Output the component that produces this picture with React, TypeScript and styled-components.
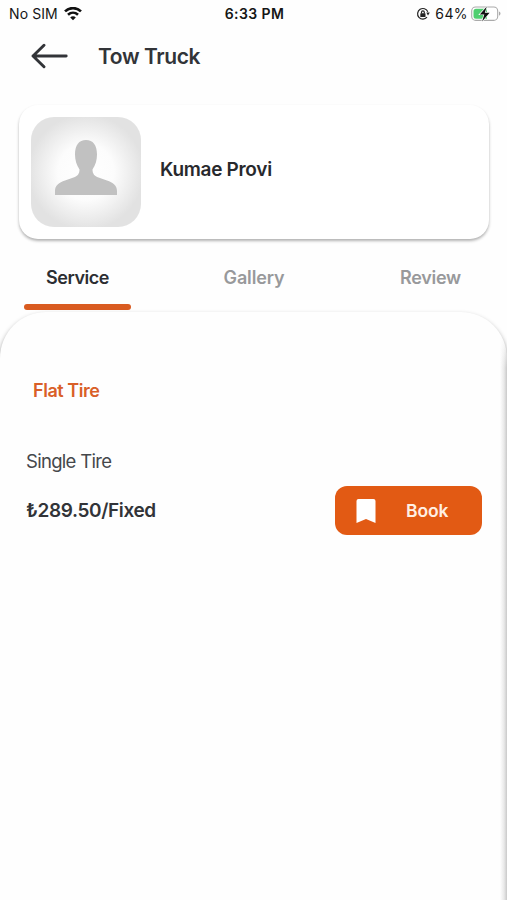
import React from "react";
import styled, { createGlobalStyle } from "styled-components";

const GlobalStyle = createGlobalStyle`
  * { box-sizing: border-box; }
  body { margin: 0; background: #fefefe; }
`;

const Screen = styled.main`
  display: flex;
  flex-direction: column;
  width: 507px;
  height: 900px;
  overflow: hidden;
  background: #fefefe;
  color: #323438;
  font-family: Inter, "Liberation Sans", sans-serif;
`;

const StatusBar = styled.div`
  display: grid;
  grid-template-columns: 1fr auto 1fr;
  align-items: center;
  height: 28px;
  padding: 0 7px 0 9px;
  color: #161616;
  font-size: 14px;
  line-height: 28px;
`;

const StatusGroup = styled.div<{ $end?: boolean }>`
  display: flex;
  align-items: center;
  justify-content: ${(p) => (p.$end ? "flex-end" : "flex-start")};
  gap: ${(p) => (p.$end ? 3 : 6)}px;
  margin-right: ${(p) => (p.$end ? -1 : 0)}px;
  white-space: nowrap;
  & > span + svg { flex: none; }
  & > svg + span { margin-left: ${(p) => (p.$end ? 2 : 0)}px; }
`;

const Label = styled.span<{ $size: number; $weight?: number; $spacing?: number }>`
  font-size: ${(p) => p.$size}px;
  font-weight: ${(p) => p.$weight ?? 600};
  letter-spacing: ${(p) => p.$spacing ?? 0}px;
  white-space: nowrap;
`;

const Header = styled.header`
  display: flex;
  align-items: center;
  height: 56px;
  padding-left: 31px;
  gap: 30px;
`;

const BackButton = styled.button`
  display: flex;
  padding: 0;
  border: 0;
  background: none;
  color: inherit;
`;

const ProfileCard = styled.section`
  display: flex;
  align-items: center;
  gap: 19px;
  height: 134px;
  margin: 21px 18px 0 19px;
  padding-left: 12px;
  padding-bottom: 1px;
  border-radius: 19px;
  background: #fff;
  box-shadow: 0 2px 3px rgba(0, 0, 0, 0.3);
  color: #28292d;
`;

const ProfileName = styled.div`
  padding-bottom: 4px;
`;

const Avatar = styled.div`
  width: 110px;
  height: 110px;
  border-radius: 23px;
  overflow: hidden;
  background: radial-gradient(circle at 50% 50%, #fff 0%, #fcfcfc 36%, #e2e2e2 74%);
`;

const Tabs = styled.nav`
  display: grid;
  grid-template-columns: repeat(3, 107px);
  justify-content: space-between;
  height: 72px;
  padding: 22px 23px 1px 24px;
`;

const Tab = styled.div<{ $active?: boolean }>`
  display: flex;
  flex-direction: column;
  align-items: center;
  justify-content: space-between;
  line-height: 34px;
  color: ${(p) => (p.$active ? "#2c2e32" : "#98999b")};
  &::after {
    content: "";
    width: 107px;
    height: 6px;
    border-radius: 3px;
    background: ${(p) => (p.$active ? "#d95b20" : "transparent")};
  }
`;

const Panel = styled.section`
  flex: 1;
  margin-top: 1px;
  padding: 65px 25px 0 26px;
  border-radius: 46px 46px 0 0;
  background:
    linear-gradient(to bottom, #fefefe, rgba(254, 254, 254, 0) 34px) 100% 22px / 7px 34px no-repeat,
    linear-gradient(to left, #c9c9c9, #e9e9e9 3px, #fefefe 7px) 100% 22px / 7px 100% no-repeat,
    #fefefe;
  box-shadow: 0 3px 5px rgba(0, 0, 0, 0.45);
`;

const Category = styled.h2`
  margin: 0 0 0 7px;
  color: #d95f28;
  font-size: 18px;
  line-height: 28px;
`;

const ServiceName = styled.div`
  margin-top: 41px;
  line-height: 30px;
  color: #45474b;
`;

const ServiceRow = styled.div`
  display: flex;
  align-items: center;
  justify-content: space-between;
  margin-top: 9px;
`;

const BookButton = styled.button`
  display: flex;
  align-items: center;
  gap: 30px;
  width: 147px;
  height: 49px;
  padding: 0 0 0 21px;
  border: 0;
  border-radius: 12px;
  background: #e25a14;
  color: #fff0e4;
  font-family: inherit;
`;

const WifiIcon = () => (
  <svg width="18" height="14" viewBox="0 0 18 14" fill="none" stroke="#111" strokeWidth="2.6">
    <path d="M1 4.400C5.500 0 12.500 0 17 4.400M4 7.800c2.900-2.700 7.100-2.700 10 0" />
    <path d="M6.200 10.400c1.600-1.500 4-1.500 5.600 0L9 13.200z" fill="#111" stroke="none" />
  </svg>
);

const RotationLockIcon = () => (
  <svg width="14" height="14" viewBox="0 0 14 14" fill="none" stroke="#222" strokeWidth="1.2">
    <path d="M11.800 4.800A5.300 5.300 0 1 0 11 10.200" />
    <path d="M10.300 5.600h3.500L12 8.400z" fill="#222" stroke="none" />
    <rect x="4.300" y="6.200" width="5.200" height="3.800" rx=".5" fill="#222" stroke="none" />
    <path d="M5.500 6.500V5.300a1.400 1.400 0 0 1 2.800 0v1.200" />
  </svg>
);

const BatteryIcon = () => (
  <svg width="30" height="16" viewBox="0 0 30 16">
    <rect x=".7" y="1" width="26" height="13.400" rx="4" fill="#fff" stroke="#aaa" strokeWidth="1.1" />
    <path d="M5 2.700h11v10H5A2.500 2.500 0 0 1 2.500 10.200v-5A2.500 2.500 0 0 1 5 2.700z" fill="#4fcf70" />
    <path d="M28 5.600c2 .7 2 3.400 0 4.200z" fill="#aaa" />
    <path d="M15.800.600 8.800 8.400h4.500l-2.200 7 7.500-8.600h-4.800z" fill="#111" stroke="#fff" strokeWidth="1.400" paintOrder="stroke" />
  </svg>
);

const ArrowIcon = () => (
  <svg width="37" height="26" viewBox="0 0 37 26" fill="none" stroke="currentColor" strokeWidth="2.900" strokeLinecap="round" strokeLinejoin="round">
    <path d="M35.200 13H2M13 2.200 2 13l11 10.800" />
  </svg>
);

const PersonIcon = () => (
  <svg width="110" height="110" viewBox="0 0 110 110">
    <path
      d="M24 78v-4c0-5.500 4-8.500 10-10.500l8.500-3C46.500 59 48.500 57 48.500 52.500 45.500 48 44 43 44 37.500 44 28 48 23 55 23s11 5 11 14.500c0 5.500-1.500 10.500-4.500 15 0 4.500 2 6.500 6 8L76 63.500c6 2 10 5 10 10.500v4z"
      fill="#c1c1c1"
    />
  </svg>
);

const BookmarkIcon = () => (
  <svg width="20" height="26" viewBox="0 0 20 26">
    <path d="M2.500 1h15Q19.500 1 19.500 3v22L10 21 .500 25V3Q.500 1 2.500 1z" fill="#fff" />
  </svg>
);

export default function App() {
  return (
    <>
      <GlobalStyle />
      <Screen>
        <StatusBar>
          <StatusGroup>
            <Label $size={14} $weight={400} $spacing={0.1}>No SIM</Label>
            <WifiIcon />
          </StatusGroup>
          <Label $size={14} $weight={600} $spacing={0.4}>6:33 PM</Label>
          <StatusGroup $end>
            <RotationLockIcon />
            <Label $size={14} $weight={400} $spacing={0.4}>64%</Label>
            <BatteryIcon />
          </StatusGroup>
        </StatusBar>
        <Header>
          <BackButton aria-label="Back"><ArrowIcon /></BackButton>
          <Label as="h1" $size={21} $spacing={-0.4}>Tow Truck</Label>
        </Header>
        <ProfileCard>
          <Avatar><PersonIcon /></Avatar>
          <ProfileName><Label $size={19} $spacing={-0.3}>Kumae Provi</Label></ProfileName>
        </ProfileCard>
        <Tabs>
          <Tab $active><Label $size={18} $spacing={-0.45}>Service</Label></Tab>
          <Tab><Label $size={18} $spacing={-0.15}>Gallery</Label></Tab>
          <Tab><Label $size={18} $spacing={-0.3}>Review</Label></Tab>
        </Tabs>
        <Panel>
          <Category><Label $size={18} $spacing={-0.45}>Flat Tire</Label></Category>
          <ServiceName><Label $size={18.5} $weight={400} $spacing={-0.7}>Single Tire</Label></ServiceName>
          <ServiceRow>
            <Label $size={19} $spacing={-0.38}>₺289.50/Fixed</Label>
            <BookButton>
              <BookmarkIcon />
              <Label $size={17.5} $spacing={-0.1}>Book</Label>
            </BookButton>
          </ServiceRow>
        </Panel>
      </Screen>
    </>
  );
}
